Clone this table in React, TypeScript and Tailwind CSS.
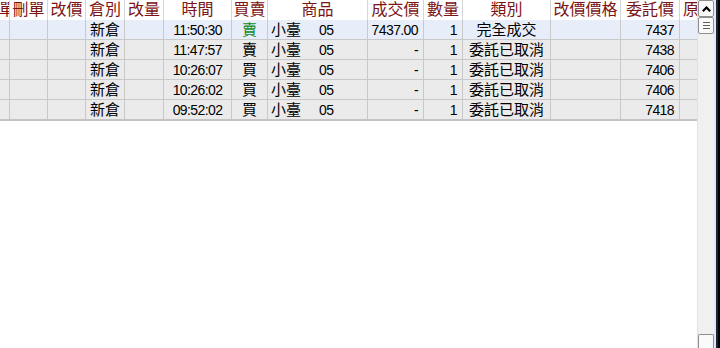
import React from "react";

type Align = "left" | "center" | "right";

interface Column {
  title: string;
  width: number;
  align: Align;
}

interface Order {
  ocType: string;
  time: string;
  side: string;
  product: string;
  month: string;
  dealPrice: string;
  qty: string;
  status: string;
  orderPrice: string;
}

const columns: Column[] = [
  { title: "委託單", width: 40, align: "right" },
  { title: "刪單", width: 38, align: "center" },
  { title: "改價", width: 38, align: "center" },
  { title: "倉別", width: 39, align: "center" },
  { title: "改量", width: 39, align: "center" },
  { title: "時間", width: 68, align: "center" },
  { title: "買賣", width: 36, align: "center" },
  { title: "商品", width: 100, align: "left" },
  { title: "成交價", width: 56, align: "right" },
  { title: "數量", width: 39, align: "right" },
  { title: "類別", width: 88, align: "center" },
  { title: "改價價格", width: 70, align: "center" },
  { title: "委託價", width: 59, align: "right" },
  { title: "原委託量", width: 70, align: "left" },
];

const orders: Order[] = [
  { ocType: "新倉", time: "11:50:30", side: "賣", product: "小臺", month: "05", dealPrice: "7437.00", qty: "1", status: "完全成交", orderPrice: "7437" },
  { ocType: "新倉", time: "11:47:57", side: "賣", product: "小臺", month: "05", dealPrice: "-", qty: "1", status: "委託已取消", orderPrice: "7438" },
  { ocType: "新倉", time: "10:26:07", side: "買", product: "小臺", month: "05", dealPrice: "-", qty: "1", status: "委託已取消", orderPrice: "7406" },
  { ocType: "新倉", time: "10:26:02", side: "買", product: "小臺", month: "05", dealPrice: "-", qty: "1", status: "委託已取消", orderPrice: "7406" },
  { ocType: "新倉", time: "09:52:02", side: "買", product: "小臺", month: "05", dealPrice: "-", qty: "1", status: "委託已取消", orderPrice: "7418" },
];

const alignClass: Record<Align, string> = {
  left: "justify-start pl-[3px]",
  center: "justify-center",
  right: "justify-end pr-[5px]",
};

function Cell({ col, children }: { col: Column; children?: React.ReactNode }) {
  return (
    <div
      className={`flex h-full shrink-0 items-center overflow-hidden whitespace-nowrap border-r border-[#c9c9c9] ${alignClass[col.align]}`}
      style={{ width: col.width }}
    >
      {children}
    </div>
  );
}

function Num({ children }: { children: React.ReactNode }) {
  return <span className="text-[14px] tracking-[-0.6px]">{children}</span>;
}

function ScrollBar() {
  return (
    <div className="relative z-10 flex h-[348px] flex-col border-l border-[#e2e2e2] bg-[#f0f0f0]">
      {/* up arrow */}
      <div className="flex h-[17px] items-center justify-center rounded-[2px] border border-[#8f8f8f] bg-[#fafafa]">
        <svg width="9" height="6" viewBox="0 0 9 6">
          <path d="M0.8 5.2 L4.5 1.5 L8.2 5.2" fill="none" stroke="#000" strokeWidth="2.2" />
        </svg>
      </div>
      {/* thumb */}
      <div className="flex h-[17px] flex-col items-center justify-center gap-[2px] rounded-[2px] border border-[#8f8f8f] bg-[#fafafa]">
        <div className="h-px w-[7px] bg-[#5f5f5f]" />
        <div className="h-px w-[7px] bg-[#5f5f5f]" />
        <div className="h-px w-[7px] bg-[#5f5f5f]" />
      </div>
      <div className="flex-1" />
      {/* down arrow, partly out of view */}
      <div className="h-[14px] rounded-t-[2px] border border-b-0 border-[#8f8f8f] bg-[#fafafa]" />
    </div>
  );
}

export default function App() {
  return (
    <div
      className="grid h-[348px] w-[720px] grid-cols-[697px_17px_2px_2px_2px] overflow-hidden bg-white text-[15px] leading-none text-black"
      style={{ fontFamily: '"Liberation Sans", "Noto Sans CJK TC", sans-serif' }}
    >
      <div className="h-[348px] overflow-hidden">
        <div className="ml-[-30px] w-max">
          {/* header */}
          <div className="flex h-[20px] bg-white">
            {columns.map((col, idx) => (
              <div
                key={col.title}
                className={`flex h-full shrink-0 items-center overflow-hidden whitespace-nowrap border-r border-[#d6d6d6] text-[16px] text-[#7b1414] ${
                  idx === 0 ? "justify-end" : idx === columns.length - 1 ? "justify-start pl-[3px]" : "justify-center"
                }`}
                style={{ width: col.width }}
              >
                <span className={idx === 0 ? "mr-[-6px]" : ""}>{col.title}</span>
              </div>
            ))}
          </div>

          {/* rows */}
          {orders.map((o, i) => {
            const bg = i === 0 ? "bg-[#e8eef9]" : "bg-[#ebebeb]";
            const last = i === orders.length - 1;
            return (
              <div
                key={i}
                className={`flex ${bg} ${last ? "h-[21px] border-b-2 border-[#c4c4c4]" : "h-[20px] border-b border-[#c9c9c9]"}`}
              >
                <Cell col={columns[0]} />
                <Cell col={columns[1]} />
                <Cell col={columns[2]} />
                <Cell col={columns[3]}>{o.ocType}</Cell>
                <Cell col={columns[4]} />
                <Cell col={columns[5]}>
                  <Num>{o.time}</Num>
                </Cell>
                <Cell col={columns[6]}>
                  <span className={i === 0 ? "text-[#0a8a1e]" : ""}>{o.side}</span>
                </Cell>
                <Cell col={columns[7]}>
                  <span className="w-[48px]">{o.product}</span>
                  <Num>{o.month}</Num>
                </Cell>
                <Cell col={columns[8]}>
                  <Num>{o.dealPrice}</Num>
                </Cell>
                <Cell col={columns[9]}>
                  <Num>{o.qty}</Num>
                </Cell>
                <Cell col={columns[10]}>{o.status}</Cell>
                <Cell col={columns[11]} />
                <Cell col={columns[12]}>
                  <Num>{o.orderPrice}</Num>
                </Cell>
                <Cell col={columns[13]} />
              </div>
            );
          })}
        </div>
      </div>

      <ScrollBar />
      <div className="h-full bg-[#e4e6f2]" />
      <div className="h-full bg-[#1d2440]" />
      <div className="h-full bg-black" />
    </div>
  );
}
